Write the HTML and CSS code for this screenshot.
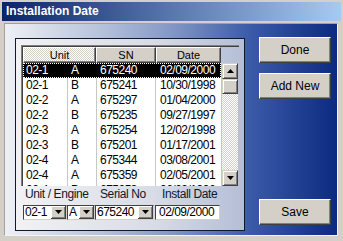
FILE: index.html
```html
<!DOCTYPE html>
<html>
<head>
<meta charset="utf-8">
<link rel="stylesheet" href="styles.css">
</head>
<body>
<div class="window">
  <div class="titlebar">Installation Date</div>
  <div class="client">
    <div class="group">
      <div class="list">
        <div class="head">
          <div class="hcell sorted">Unit</div>
          <div class="hcell">SN</div>
          <div class="hcell">Date</div>
        </div>
        <div class="body">
          <div class="rows">
            <div class="row sel"><span>02-1</span><span>A</span><span>675240</span><span>02/09/2000</span></div>
            <div class="row"><span>02-1</span><span>B</span><span>675241</span><span>10/30/1998</span></div>
            <div class="row"><span>02-2</span><span>A</span><span>675297</span><span>01/04/2000</span></div>
            <div class="row"><span>02-2</span><span>B</span><span>675235</span><span>09/27/1997</span></div>
            <div class="row"><span>02-3</span><span>A</span><span>675254</span><span>12/02/1998</span></div>
            <div class="row"><span>02-3</span><span>B</span><span>675201</span><span>01/17/2001</span></div>
            <div class="row"><span>02-4</span><span>A</span><span>675344</span><span>03/08/2001</span></div>
            <div class="row"><span>02-4</span><span>A</span><span>675359</span><span>02/05/2001</span></div>
            <div class="row"><span>02-4</span><span>B</span><span>675253</span><span>06/29/1996</span></div>
          </div>
          <div class="vscroll">
            <div class="sbtn"><svg width="7" height="4" viewBox="0 0 7 4"><path d="M3.5 0L7 4H0z" fill="#000"/></svg></div>
            <div class="thumb"></div>
            <div class="track"></div>
            <div class="sbtn"><svg width="7" height="4" viewBox="0 0 7 4"><path d="M0 0H7L3.5 4z" fill="#000"/></svg></div>
          </div>
        </div>
      </div>
      <div class="editor">
        <div class="labels">
          <span class="lbl l1">Unit / Engine</span>
          <span class="lbl l2">Serial No</span>
          <span class="lbl l3">Install Date</span>
        </div>
        <div class="fields">
          <div class="combo c1"><span class="val">02-1</span><span class="dd"><svg width="7" height="4" viewBox="0 0 7 4"><path d="M0 0H7L3.5 4z" fill="#000"/></svg></span></div>
          <div class="combo c2"><span class="val">A</span><span class="dd"><svg width="7" height="4" viewBox="0 0 7 4"><path d="M0 0H7L3.5 4z" fill="#000"/></svg></span></div>
          <div class="combo c3"><span class="val">675240</span><span class="dd"><svg width="7" height="4" viewBox="0 0 7 4"><path d="M0 0H7L3.5 4z" fill="#000"/></svg></span></div>
          <div class="combo c4"><span class="val">02/09/2000</span></div>
        </div>
      </div>
    </div>
    <div class="buttons">
      <div class="btn">Done</div>
      <div class="btn">Add New</div>
      <div class="btn save">Save</div>
    </div>
  </div>
</div>
</body>
</html>
```
FILE: styles.css
```css
* { box-sizing: border-box; margin: 0; padding: 0; }
html, body { width: 343px; height: 241px; overflow: hidden; }
body { background: #d4d0c8; font-family: "Liberation Sans", Arial, sans-serif; }

.window {
  width: 343px; height: 241px;
  background: #d4d0c8;
  padding: 2px;
  display: flex; flex-direction: column;
}
.titlebar {
  height: 19px;
  background: linear-gradient(to right, #0a246a, #a6caf0);
  color: #fff;
  font-weight: bold;
  font-size: 12px;
  line-height: 19px;
  padding-left: 4px;
}
.client {
  margin: 2px 3px 3px 2px;
  flex: 1;
  border-top: 1px solid #a0a0a0;
  border-left: 1px solid #a0a0a0;
  border-right: 1px solid #f4f4f4;
  border-bottom: 1px solid #f4f4f4;
  background: linear-gradient(to right, #eef0f4 0%, #b8c4dc 28%, #8498c6 50%, #3a5aa8 74%, #0c2a80 100%);
  display: flex;
}
.group {
  margin: 14px 0 0 10px;
  width: 230px; height: 193px;
  border: 1px solid #101830;
  background: linear-gradient(to right, #f2f2f4 0%, #d8dce6 60%, #b4bed6 100%);
  padding: 6px 0 0 5px;
  display: flex; flex-direction: column;
}
.list {
  width: 218px; height: 141px; flex: none;
  border-left: 1px solid #808080;
  border-top: 1px solid #808080;
  box-shadow: inset 1px 1px 0 #404040;
  padding: 1px 0 0 1px;
  display: flex; flex-direction: column;
  overflow: hidden;
}
.head { display: flex; height: 16px; flex: none; }
.hcell {
  height: 16px;
  background: #d4d0c8;
  border-top: 1px solid #fff; border-left: 1px solid #fff;
  border-right: 1px solid #404040; border-bottom: 1px solid #404040;
  box-shadow: inset -1px -1px 0 #808080;
  font-size: 11px; line-height: 14px; text-align: center; color: #000;
}
.hcell:nth-child(1) { width: 73px; }
.hcell:nth-child(2) { width: 60px; }
.hcell:nth-child(3) { width: 65px; }
.hcell.sorted {
  background: repeating-conic-gradient(#ffffff 0 25%, #d4d0c8 0 50%) 0 0 / 2px 2px;
}
.body { display: flex; flex: 1; min-height: 0; }
.rows { width: 198px; background: #fff; overflow: hidden; }
.row {
  display: flex; height: 15px;
  font-size: 12px; letter-spacing: -0.5px; line-height: 15px; color: #000;
}
.row span { padding-left: 3px; border-right: 1px solid #c8c8c8; white-space: nowrap; overflow: hidden; }
.row span:nth-child(1) { width: 45px; }
.row span:nth-child(2) { width: 29px; }
.row span:nth-child(3) { width: 59px; }
.row span:nth-child(4) { width: 65px; border-right: none; padding-left: 4px; }
.row.sel { background: #000; color: #fff; outline: 1px dotted #fff; outline-offset: -1px; }
.row.sel span { border-right-color: #000; }
.vscroll {
  width: 16px; margin-left: 1px;
  display: flex; flex-direction: column;
  background: repeating-conic-gradient(#ffffff 0 25%, #d4d0c8 0 50%) 0 0 / 2px 2px;
}
.sbtn, .thumb {
  height: 16px; flex: none;
  background: #d4d0c8;
  border-top: 1px solid #d4d0c8; border-left: 1px solid #d4d0c8;
  border-right: 1px solid #404040; border-bottom: 1px solid #404040;
  box-shadow: inset 1px 1px 0 #fff, inset -1px -1px 0 #808080;
  display: flex; align-items: center; justify-content: center;
}
.thumb { height: 15px; }
.track { flex: 1; }

.editor { padding-left: 2px; }
.labels {
  display: flex; height: 15px; margin-top: 1px;
  font-size: 12px; letter-spacing: -0.4px; line-height: 14px; color: #101828;
}
.lbl { white-space: nowrap; }
.l1 { margin-left: 2px; width: 75px; }
.l2 { width: 62px; }
.fields { display: flex; margin-top: 3px; height: 15px; }
.combo {
  height: 15px; background: #fff;
  border-top: 1px solid #404040; border-left: 1px solid #404040;
  border-right: 1px solid #d4d0c8; border-bottom: 1px solid #d4d0c8;
  display: flex; justify-content: space-between;
  font-size: 12px; letter-spacing: -0.5px; line-height: 13px; color: #000;
  white-space: nowrap; overflow: hidden;
}
.val { padding-left: 1px; }
.dd {
  width: 15px; height: 13px; flex: none;
  background: #d4d0c8;
  border-right: 1px solid #404040; border-bottom: 1px solid #404040;
  box-shadow: inset 1px 1px 0 #fff, inset -1px -1px 0 #808080;
  display: flex; align-items: center; justify-content: center;
}
.c1 { width: 44px; }
.c2 { width: 28px; }
.c3 { width: 59px; }
.c4 { width: 65px; margin-left: 1px; padding-left: 2px; }

.buttons {
  margin: 13px 0 10px 14px;
  width: 72px;
  display: flex; flex-direction: column; gap: 10px;
}
.btn {
  height: 26px;
  background: #d4d0c8;
  border-top: 1px solid #fff; border-left: 1px solid #fff;
  border-right: 1px solid #404040; border-bottom: 1px solid #404040;
  box-shadow: inset -1px -1px 0 #808080;
  font-size: 12px; line-height: 24px; text-align: center; color: #000;
}
.btn.save { margin-top: auto; }
```
